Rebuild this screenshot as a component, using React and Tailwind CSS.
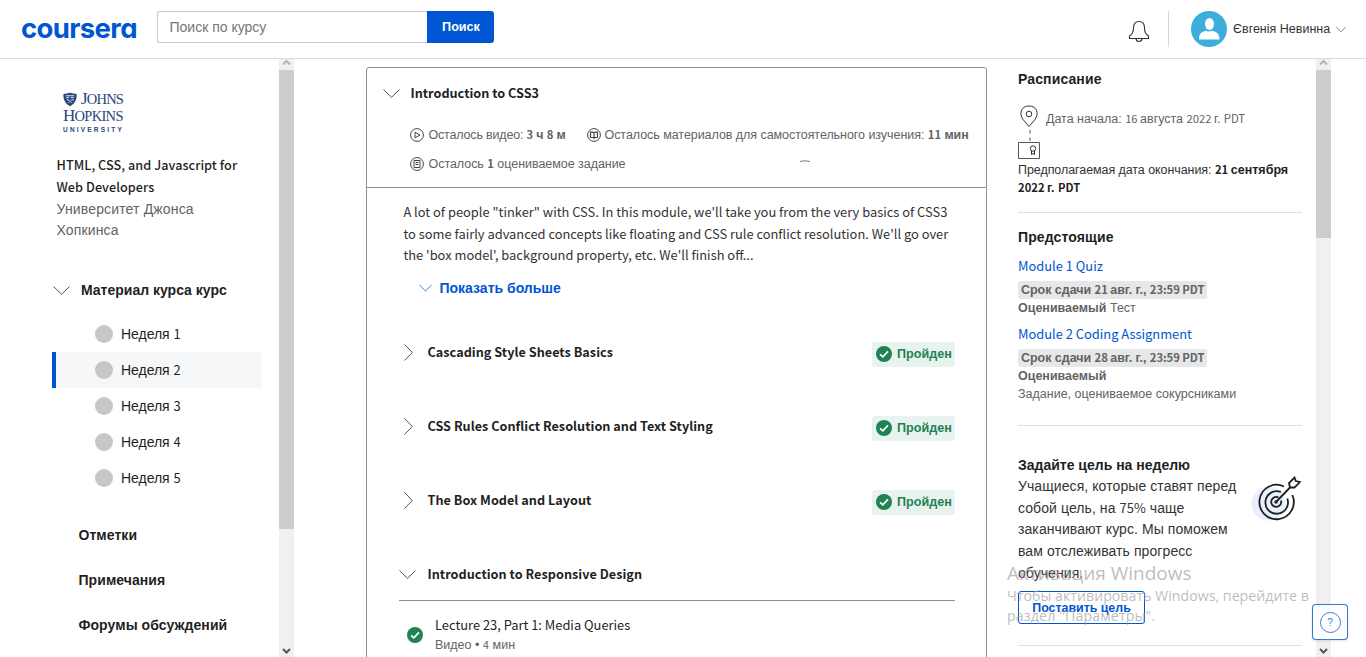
import React from "react";

const LATIN = /([A-Za-z0-9"'][A-Za-z0-9"',.:%+ -]*)/;

/* Sets Latin and digit runs in their own face, Cyrillic runs in the inherited one. */
function Mix({ children, size = "lg" }) {
  const cls = {
    lg: "font-['Noto_Sans_CJK_SC',sans-serif] text-[0.92em] leading-none",
    bold: "font-['Noto_Sans_CJK_SC',sans-serif] text-[0.905em] leading-none",
    sm: "font-['Noto_Sans_CJK_SC',sans-serif] text-[0.9em] leading-none",
  }[size];
  return children.split(LATIN).map((part, i) =>
    i % 2 ? (
      <span key={i} className={cls}>{part}</span>
    ) : (
      part
    )
  );
}

function ChevronDown({ className = "" }) {
  return (
    <svg className={"shrink-0 " + className} width="17" height="9" viewBox="0 0 17 9" fill="none" stroke="currentColor">
      <path d="M0.5 0.5 L8.5 8.3 L16.5 0.5" />
    </svg>
  );
}

function ChevronRight() {
  return (
    <svg className="mt-0.5 shrink-0 text-[#555]" width="9" height="17" viewBox="0 0 9 17" fill="none" stroke="currentColor">
      <path d="M0.5 0.5 L8.3 8.5 L0.5 16.5" />
    </svg>
  );
}

function Check() {
  return (
    <svg className="shrink-0" width="16" height="16" viewBox="0 0 16 16">
      <circle cx="8" cy="8" r="8" fill="#1f8354" />
      <path d="M4 8.3 L6.8 10.8 L12 5.4" fill="none" stroke="#fff" strokeWidth="1.7" />
    </svg>
  );
}

function MetaIcon({ kind }) {
  return (
    <svg className="shrink-0" width="14" height="14" viewBox="0 0 14 14" fill="none" stroke="#444">
      <circle cx="7" cy="7" r="6.4" />
      {kind === "play" && <path d="M5 4.2 L10 7 L5 9.8 Z" />}
      {kind === "book" && <path d="M3.500 4.200 H6 L7 5 L8 4.200 H10.500 V9.500 H8 L7 10.200 L6 9.500 H3.500 Z M7 5 V10" strokeWidth="1.200" />}
      {kind === "doc" && <path d="M4 3.5 H10 V10.5 H4 Z M5.5 5.5 H8.5 M5.5 7.500 H8.5" />}
    </svg>
  );
}

function Scrollbar({ thumb }) {
  return (
    <div className="flex h-full w-[15px] shrink-0 flex-col items-center bg-[#f0f0f0]">
      <svg className="h-[11px] w-[15px] shrink-0" viewBox="0 0 15 11" fill="none" stroke="#b4b4b4" strokeWidth="2">
        <path d="M4 5.5 L7.5 2 L11 5.5" />
      </svg>
      <div className={"w-full shrink-0 bg-[#cdcdcd] " + thumb} />
      <div className="grow" />
      <svg className="h-[14px] w-[15px] shrink-0" viewBox="0 0 15 14" fill="none" stroke="#555" strokeWidth="2">
        <path d="M4 6 L7.5 9.500 L11 6" />
      </svg>
    </div>
  );
}

function Header() {
  return (
    <header className="flex h-[59px] shrink-0 border-b border-[#dcdcdc]">
      <div className="ml-[21px] mt-[12px] w-[136px] whitespace-nowrap font-[Inter,sans-serif] text-[27.500px] font-bold leading-8 tracking-[-0.650px] text-[#0056d2] [font-feature-settings:'cv11']">
        coursera
      </div>
      <div className="mt-[11px] flex h-8">
        <div className="w-[270px] rounded-l-[3px] border border-r-0 border-[#c9c9d9] pl-[11.500px] text-sm leading-[30px] text-[#757575]">
          Поиск по курсу
        </div>
        <button className="w-[67px] rounded-r-[3px] bg-[#0056d2] pl-px text-[12.600px] font-bold text-white">Поиск</button>
      </div>
      <svg className="ml-[634px] mt-5" width="22" height="23" viewBox="0 0 22 23" fill="none" stroke="#333" strokeWidth="1.1">
        <path d="M1.500 18.500 V16 C4 14.500 5.500 13 5.500 8 C5.500 3.500 7.500 1.500 11 1.500 C14.500 1.500 16.500 3.500 16.500 8 C16.500 13 18 14.500 20.500 16 V18.500 Z" />
        <path d="M8 18.500 C8 20.500 9.200 21.500 11 21.500 C12.800 21.500 14 20.500 14 18.500" />
      </svg>
      <div className="ml-[18px] mt-[11px] h-9 w-px bg-[#d8d8d8]" />
      <svg className="ml-[22px] mt-[11px]" width="36" height="36" viewBox="0 0 36 36">
        <circle cx="18" cy="18" r="18" fill="#3daedc" />
        <ellipse cx="18.500" cy="13" rx="4.500" ry="6" fill="#fff" />
        <path d="M8 28.500 C8 21.500 12 20.500 15 19.800 Q18 21 21 19.800 C24 20.500 28.500 21.500 28.500 28.500 Z" fill="#fff" />
      </svg>
      <div className="ml-1.5 mt-5 w-[103px] whitespace-nowrap text-[12.5px] leading-[18px] text-[#333]">Євгенія Невинна</div>
      <ChevronDown className="mt-[26px] h-[7px] w-[10px] text-[#333]" />
    </header>
  );
}

function UniversityLogo() {
  return (
    <div className="ml-[63px] flex h-[46px] w-[64px] shrink-0 flex-col text-[#2a4480]">
      <div className="flex h-4 items-start">
        <svg className="mt-px" width="15" height="15" viewBox="0 0 16 15">
          <path d="M0.500 1.500 Q4 1.500 7.500 0.300 Q11 1.500 14.500 1.500 C15 8 12 12 7.500 14.700 C3 12 0 8 0.500 1.500 Z" fill="#2a4480" />
          <path d="M3 3.500 H12 M3.500 5.500 H6.500 M8.500 5.500 H11.500 M4 7.500 L7 8.500 M8.500 8.500 L11.500 7.500 M6 11 L7.500 9.500 L9 11" stroke="#fff" strokeWidth="0.900" fill="none" />
        </svg>
        <div className="ml-[3px] font-['Liberation_Serif',serif] text-[17px] leading-[15px] tracking-[-0.8px]">
          J<span className="text-[14.500px]">OHNS</span>
        </div>
      </div>
      <div className="font-['Liberation_Serif',serif] text-[17px] leading-[17px] tracking-[-0.700px]">
        H<span className="text-[14.500px]">OPKINS</span>
      </div>
      <div className="mt-px text-[6.500px] font-bold leading-[7px] tracking-[2.200px]">UNIVERSITY</div>
    </div>
  );
}

function Sidebar() {
  return (
    <aside className="flex h-full w-[279px] shrink-0 flex-col overflow-hidden pt-8">
      <UniversityLogo />
      <div className="ml-[56.500px] mt-[18px] w-[200px] whitespace-nowrap text-sm leading-[21.700px] text-[#1f1f1f]">
        <div className="font-medium tracking-[0.050px]"><Mix size="bold">HTML, CSS, and Javascript for</Mix></div>
        <div className="font-medium tracking-[0.050px]"><Mix size="bold">Web Developers</Mix></div>
        <div className="relative top-px tracking-[0.150px] text-[#636363]">Университет Джонса</div>
        <div className="tracking-[0.150px] text-[#636363]">Хопкинса</div>
      </div>
      <div className="ml-[52.500px] mt-[38.200px] flex h-5 items-center gap-[11.500px] text-sm font-bold text-[#1f1f1f]">
        <ChevronDown className="text-[#555]" />
        Материал курса курс
      </div>
      <div className="ml-[52px] mt-4 flex w-[210px] flex-col">
        {[1, 2, 3, 4, 5].map((n) => (
          <div
            key={n}
            className={
              "flex h-9 items-center gap-2 border-l-4 pl-[39px] text-sm text-[#1f1f1f] " +
              (n === 2 ? "rounded-r-[3px] border-[#0056d2] bg-[#f5f7f8]" : "border-transparent")
            }
          >
            <span className="h-[18px] w-[18px] rounded-full bg-[#c4c6c8]" />
            <span className="tracking-[-0.040px]"><Mix>{"Неделя " + n}</Mix></span>
          </div>
        ))}
      </div>
      <nav className="ml-[78.500px] mt-[17px] flex flex-col text-sm font-bold tracking-[0.060px] text-[#1f1f1f]">
        {["Отметки", "Примечания", "Форумы обсуждений"].map((t) => (
          <div key={t} className="h-[45px] leading-[45px]">{t}</div>
        ))}
      </nav>
    </aside>
  );
}

function ModuleCard() {
  return (
    <section className="ml-[72px] mt-2 flex h-[620px] w-[621px] shrink-0 flex-col rounded-[3px] border border-[#8e9093]">
      <div className="flex h-[120px] shrink-0 flex-col border-b border-[#8e9093]">
        <div className="ml-[15.500px] mt-[15px] flex h-5 items-center gap-[11px] text-sm font-bold text-[#1f1f1f]">
          <ChevronDown className="text-[#555]" />
          <span><Mix size="bold">Introduction to CSS3</Mix></span>
        </div>
        <div className="ml-[43px] mt-[23px] flex h-[18px] whitespace-nowrap text-[12.500px] leading-[18px] text-[#636363]">
          <div className="flex w-[176.500px] items-center gap-[4.500px]">
            <MetaIcon kind="play" />
            <span className="tracking-[-0.180px]">Осталось видео: <b><Mix size="sm">3</Mix> ч <Mix size="sm">8</Mix> м</b></span>
          </div>
          <div className="flex items-center gap-1">
            <MetaIcon kind="book" />
            <span className="tracking-[-0.050px]">Осталось материалов для самостоятельного изучения: <b><Mix size="sm">11</Mix> мин</b></span>
          </div>
        </div>
        <div className="ml-[43px] mt-[11px] flex h-[18px] items-center whitespace-nowrap text-[12.500px] leading-[18px] text-[#636363]">
          <MetaIcon kind="doc" />
          <span className="ml-[4.500px] tracking-[-0.040px]">Осталось <b><Mix size="sm">1</Mix></b> оцениваемое задание</span>
          <svg className="mb-1.5 ml-[174px]" width="10" height="2" viewBox="0 0 10 2"><path d="M0 1.500 Q5 0 10 1.500" fill="none" stroke="#777" /></svg>
        </div>
      </div>
      <div className="ml-[36.400px] mt-[14px] whitespace-nowrap text-sm leading-[21.600px] text-[#333]">
        <div><Mix>{`A lot of people "tinker" with CSS. In this module, we'll take you from the very basics of CSS3`}</Mix></div>
        <div><Mix>to some fairly advanced concepts like floating and CSS rule conflict resolution. We'll go over</Mix></div>
        <div><Mix>the 'box model', background property, etc. We'll finish off...</Mix></div>
      </div>
      <div className="ml-[51.500px] mt-[11px] flex h-5 items-center gap-2 text-sm font-bold text-[#0056d2]">
        <ChevronDown className="h-[8px] w-[13px]" />
        Показать больше
      </div>
      <div className="ml-8 mt-[17px] flex w-[556px] flex-col">
        {["Cascading Style Sheets Basics", "CSS Rules Conflict Resolution and Text Styling", "The Box Model and Layout"].map((t) => (
          <div key={t} className="flex h-[74px] items-center pl-[5px]">
            <ChevronRight />
            <span className="ml-[14.500px] text-sm font-bold tracking-[0.020px] text-[#1f1f1f]"><Mix size="bold">{t}</Mix></span>
            <span className="ml-auto mt-1.5 flex h-[25px] w-[83px] items-start gap-[5px] rounded-[3px] bg-[#e8f2ee] pl-1 pt-1 text-[12.600px] font-bold leading-4 text-[#1f8354]">
              <Check />
              <span>Пройден</span>
            </span>
          </div>
        ))}
        <div className="flex h-[64px] gap-[11.500px] border-b border-[#8e9093] pt-[27px] text-sm font-bold leading-5 text-[#1f1f1f]">
          <ChevronDown className="mt-1.5 text-[#555]" />
          <span className="tracking-[0.030px]"><Mix size="bold">Introduction to Responsive Design</Mix></span>
        </div>
        <div className="flex items-center gap-[12px] pl-2 pt-[14px]">
          <Check />
          <div className="text-sm leading-5 text-[#1f1f1f]">
            <div><Mix>Lecture 23, Part 1: Media Queries</Mix></div>
            <div className="pt-px text-[12.500px] leading-[19px] text-[#636363]">Видео • <Mix size="sm">4</Mix> мин</div>
          </div>
        </div>
      </div>
    </section>
  );
}

function Deadline({ title, due, children }) {
  return (
    <div className="flex flex-col items-start text-[12.500px] leading-[18px] text-[#636363]">
      <div className="h-[25px] pt-px text-sm leading-[18px] text-[#0056d2]"><Mix>{title}</Mix></div>
      <div className="h-[18px] w-[189px] whitespace-nowrap rounded-[3px] bg-[#e5e7e8] pl-[3px] font-bold tracking-[-0.040px]">
        <Mix size="sm">{due}</Mix>
      </div>
      {children}
    </div>
  );
}

function TargetIcon() {
  return (
    <svg className="shrink-0" width="52" height="48" viewBox="0 0 52 48" fill="none" stroke="#1f1f1f" strokeWidth="1.800">
      <circle cx="17.500" cy="27.500" r="17" fill="#e8f0fe" stroke="none" />
      <path d="M33 10.500 A17.200 17.200 0 1 0 41.300 19" />
      <path d="M30 16 A11.300 11.300 0 1 0 36.300 22.500" />
      <path d="M27.500 21.500 A5 5 0 1 0 30 24.500" />
      <path d="M25 26 L39 11.500 M39 11.500 L38 7 L43.500 1.500 L44.800 5 L48.800 6 L43.500 11.500 Z" />
      <circle cx="25" cy="26" r="0.800" fill="#1f1f1f" />
    </svg>
  );
}

function RightColumn() {
  return (
    <aside className="ml-[31px] flex h-full w-[298px] shrink-0 flex-col overflow-hidden pr-[14px] text-[#1f1f1f]">
      <h2 className="mt-2.5 h-5 text-sm font-bold leading-5 tracking-[0.120px]">Расписание</h2>
      <div className="mt-4 flex h-[55px]">
        <svg className="shrink-0" width="22" height="55" viewBox="0 0 22 55" fill="none" stroke="#555">
          <path d="M11 21.500 L5 14.500 C0.500 8 3.500 1 11 1 C18.500 1 21.500 8 17 14.500 Z" stroke="#333" />
          <circle cx="11" cy="9" r="2.800" stroke="#333" />
          <path d="M12 25 V36" strokeDasharray="3.500 4" />
          <path d="M0.500 37.500 H21.500 V53.500 H0.500 Z" />
          <circle cx="15" cy="43.500" r="2.700" stroke="#333" />
          <path d="M13.500 46 V49.500 L15 48.500 L16.500 49.500 V46" stroke="#333" />
        </svg>
        <div className="ml-1.5 mt-[5px] whitespace-nowrap text-[12.500px] leading-[18px] tracking-[-0.020px] text-[#636363]">
          <Mix size="sm">Дата начала: 16 августа 2022 г. PDT</Mix>
        </div>
      </div>
      <div className="mt-px whitespace-nowrap text-[12.500px] leading-[18px] text-[#333]">
        <span className="tracking-[-0.070px]">Предполагаемая дата окончания:</span> <b className="text-[#1f1f1f]"><Mix size="sm">21 сентября</Mix></b>
        <br />
        <b className="text-[#1f1f1f]"><Mix size="sm">2022 г. PDT</Mix></b>
      </div>
      <div className="mt-[15px] h-px shrink-0 bg-[#e1e1e1]" />
      <h2 className="mt-[14px] h-5 text-sm font-bold leading-5 tracking-[0.120px]">Предстоящие</h2>
      <div className="mt-[9px] flex flex-col gap-[7px]">
        <Deadline title="Module 1 Quiz" due="Срок сдачи 21 авг. г., 23:59 PDT">
          <div><b>Оцениваемый</b> Тест</div>
        </Deadline>
        <Deadline title="Module 2 Coding Assignment" due="Срок сдачи 28 авг. г., 23:59 PDT">
          <b>Оцениваемый</b>
          <div>Задание, оцениваемое сокурсниками</div>
        </Deadline>
      </div>
      <div className="mt-[22px] h-px shrink-0 bg-[#e1e1e1]" />
      <div className="flex pt-[29px]">
        <div className="w-[219px] shrink-0 whitespace-nowrap">
          <h2 className="h-5 text-sm font-bold leading-5">Задайте цель на неделю</h2>
          <p className="pt-px text-sm leading-[21.700px] tracking-[0.080px] text-[#333]">
            Учащиеся, которые ставят перед<br />
            собой цель, на <Mix>75%</Mix> чаще<br />
            заканчивают курс. Мы поможем<br />
            вам отслеживать прогресс<br />
            обучения.
          </p>
        </div>
        <div className="ml-[14px] mt-[21px]"><TargetIcon /></div>
      </div>
      <button className="mt-[6px] h-[33px] w-[127px] shrink-0 rounded-[3px] border border-[#0056d2] pt-0.5 text-[12.400px] font-bold text-[#0056d2]">
        Поставить цель
      </button>
      <div className="mt-[21px] h-px shrink-0 bg-[#e1e1e1]" />
    </aside>
  );
}

export default function App() {
  return (
    <div className="relative flex h-[657px] w-[1366px] flex-col overflow-hidden bg-white font-['Liberation_Sans',sans-serif]">
      <Header />
      <div className="flex min-h-0 grow">
        <Sidebar />
        <Scrollbar thumb="h-[459px]" />
        <ModuleCard />
        <RightColumn />
        <Scrollbar thumb="h-[168px]" />
      </div>
      <div className="absolute left-[1007px] top-[560px] whitespace-nowrap font-['Open_Sans',sans-serif] text-[#a0a0a0]/70">
        <div className="text-[19px] leading-[26px]">Активация Windows</div>
        <div className="text-[14.200px] leading-5">Чтобы активировать Windows, перейдите в</div>
        <div className="text-[14.200px] leading-5 tracking-[0.130px]">раздел "Параметры".</div>
      </div>
      <div className="absolute left-[1312px] top-[604px] flex h-9 w-9 items-center justify-center rounded-sm border border-[#0056d2]/80 bg-white shadow">
        <div className="flex h-[21px] w-[21px] items-center justify-center rounded-full border border-[#3a7bdc] text-[10px] text-[#3a7bdc]">?</div>
      </div>
    </div>
  );
}
